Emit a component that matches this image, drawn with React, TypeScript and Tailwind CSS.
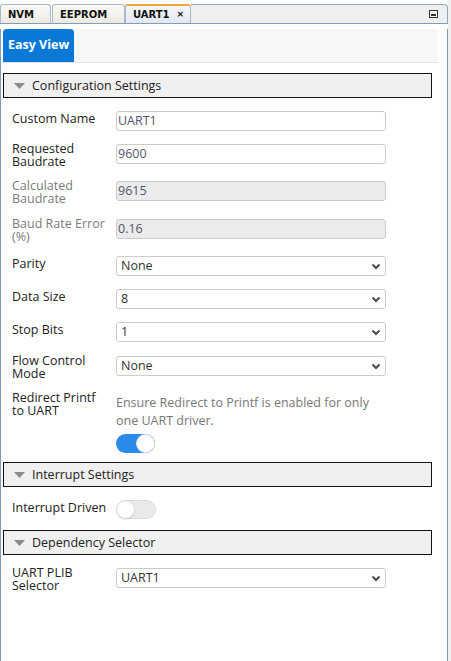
import type { ReactNode } from 'react';

const font = { fontFamily: '"Open Sans", "Noto Sans", sans-serif' };

const Chevron = () => (
  <svg width="10" height="7" viewBox="0 0 10 7" className="shrink-0">
    <path d="M1.5 1.5 L5 5 L8.5 1.5" fill="none" stroke="#4a4a4a" strokeWidth="2" />
  </svg>
);

const Section = ({ title }: { title: string }) => (
  <div className="ml-[2px] flex h-[25px] w-[429px] items-center border border-[#111] bg-[#f0f0f0]">
    <svg width="11" height="6" viewBox="0 0 11 6" className="ml-[10px] mr-[7px]">
      <path d="M0 0 L11 0 L5.5 6 Z" fill="#8a8a8a" />
    </svg>
    <span className="mt-[1px] text-[12.5px] leading-none text-[#222]">{title}</span>
  </div>
);

interface RowProps {
  label: ReactNode;
  h: string;
  two?: boolean;
  disabled?: boolean;
  children: ReactNode;
}

const Row = ({ label, h, two, disabled, children }: RowProps) => (
  <div className={`flex items-start pl-[11px] ${h}`}>
    <div
      className={`w-[104px] pr-[4px] text-[12.5px] leading-[13px] ${two ? '-mt-[2px]' : 'mt-[1px]'} ${
        disabled ? 'text-[#7c7c7c]' : 'text-[#222]'
      }`}
    >
      {label}
    </div>
    {children}
  </div>
);

const TextBox = ({ value, disabled }: { value: string; disabled?: boolean }) => (
  <div
    className={`flex h-[20px] w-[270px] items-center rounded-[3px] border border-[#cccccc] pl-[1px] text-[12.5px] text-[#55556a] ${
      disabled ? 'bg-[#ebebeb]' : 'bg-white'
    }`}
  >
    {value}
  </div>
);

const Select = ({ value }: { value: string }) => (
  <div className="flex h-[20px] w-[270px] items-center justify-between rounded-[3px] border border-[#cccccc] bg-white pl-[4px] pr-[4px] text-[12.5px] text-[#333]">
    <span>{value}</span>
    <Chevron />
  </div>
);

const Toggle = ({ on }: { on: boolean }) =>
  on ? (
    <div className="relative h-[19px] w-[39px] rounded-full bg-[#2a8ce8]">
      <div className="absolute right-0 top-0 h-[19px] w-[19px] rounded-full border border-[#e4e4e4] bg-white" />
    </div>
  ) : (
    <div className="relative h-[19px] w-[40px] rounded-full border border-[#dadada] bg-[#e9e9e9]">
      <div className="absolute -left-[1px] -top-[1px] h-[19px] w-[19px] rounded-full border border-[#dcdcdc] bg-white shadow-[0_1px_1px_rgba(0,0,0,0.08)]" />
    </div>
  );

const tabFont = { fontFamily: '"DejaVu Sans", Verdana, sans-serif' };

export default function App() {
  return (
    <div className="h-[661px] w-[451px] overflow-hidden bg-[#f0f0f0]" style={font}>
      <div className="w-[448px] bg-white">
        {/* editor tabs */}
        <div className="flex h-[24px] border-b border-[#7f9db9]" style={tabFont}>
          <div className="mt-[4px] flex h-[19px] w-[51px] items-center rounded-t-[3px] border border-b-0 border-[#a9b8c8] bg-linear-to-b from-[#fbfaf7] to-[#ebe9e0] pl-[7px] text-[10px] font-bold text-[#111]">
            NVM
          </div>
          <div className="ml-[1px] mt-[4px] flex h-[19px] w-[73px] items-center rounded-t-[3px] border border-b-0 border-[#a9b8c8] bg-linear-to-b from-[#fbfaf7] to-[#ebe9e0] pl-[7px] text-[10px] font-bold text-[#111]">
            EEPROM
          </div>
          <div className="mt-[4px] flex h-[19px] w-[66px] items-center rounded-t-[3px] border border-b-0 border-t-2 border-[#a9b8c8] border-t-[#f3a53a] bg-linear-to-b from-[#f4f6fb] to-[#e3e8f2] pl-[7px] text-[10px] font-bold text-[#111]">
            <span>UART1</span>
            <span className="ml-[7px] text-[9px] leading-none">×</span>
          </div>
          <div className="mt-[4px] flex flex-1 justify-end rounded-tr-[4px] border-r border-t border-[#8fa6bd] bg-[#efefef] pr-[9px] pt-[5px]">
            <div className="flex h-[8px] w-[9px] items-end border border-[#333] bg-[#f4f4f4] p-[1px]">
              <div className="h-[2px] w-full bg-[#333]" />
            </div>
          </div>
        </div>

        {/* panel */}
        <div className="h-[637px] border-l border-r border-[#7f9db9] bg-white">
          <div className="ml-[2px] mt-[5px] flex h-[34px] w-[435px] border-b border-[#dfe2e6] bg-[#f6f7f9]">
            <div className="flex h-[33px] w-[71px] items-center rounded-t-[4px] bg-[#0a78d6] pl-[5px] text-[12.5px] font-bold text-white">
              Easy View
            </div>
          </div>

          <div className="mt-[10px]">
            <Section title="Configuration Settings" />
          </div>

          <div className="mt-[13px]">
            <Row label="Custom Name" h="h-[33px]">
              <TextBox value="UART1" />
            </Row>
            <Row label="Requested Baudrate" h="h-[37px]" two>
              <TextBox value="9600" />
            </Row>
            <Row label="Calculated Baudrate" h="h-[38px]" two disabled>
              <TextBox value="9615" disabled />
            </Row>
            <Row label="Baud Rate Error (%)" h="h-[37px]" two disabled>
              <TextBox value="0.16" disabled />
            </Row>
            <Row label="Parity" h="h-[33px]">
              <Select value="None" />
            </Row>
            <Row label="Data Size" h="h-[33px]">
              <Select value="8" />
            </Row>
            <Row label="Stop Bits" h="h-[34px]">
              <Select value="1" />
            </Row>
            <Row label="Flow Control Mode" h="h-[37px]" two>
              <Select value="None" />
            </Row>
            <Row
              label={
                <>
                  Redirect Printf
                  <br />
                  to UART
                </>
              }
              h="h-[69px]"
              two
            >
              <div className="mt-[1px] w-[270px]">
                <div className="text-[12.5px] leading-[18px] text-[#777]">
                  Ensure Redirect to Printf is enabled for only
                  <br />
                  one UART driver.
                </div>
                <div className="mt-[4px]">
                  <Toggle on />
                </div>
              </div>
            </Row>
          </div>

          <Section title="Interrupt Settings" />
          <div className="mt-[13px]">
            <Row label="Interrupt Driven" h="h-[30px]">
              <Toggle on={false} />
            </Row>
          </div>

          <Section title="Dependency Selector" />
          <div className="mt-[13px]">
            <Row label="UART PLIB Selector" h="h-[33px]" two>
              <Select value="UART1" />
            </Row>
          </div>
        </div>
      </div>
    </div>
  );
}
